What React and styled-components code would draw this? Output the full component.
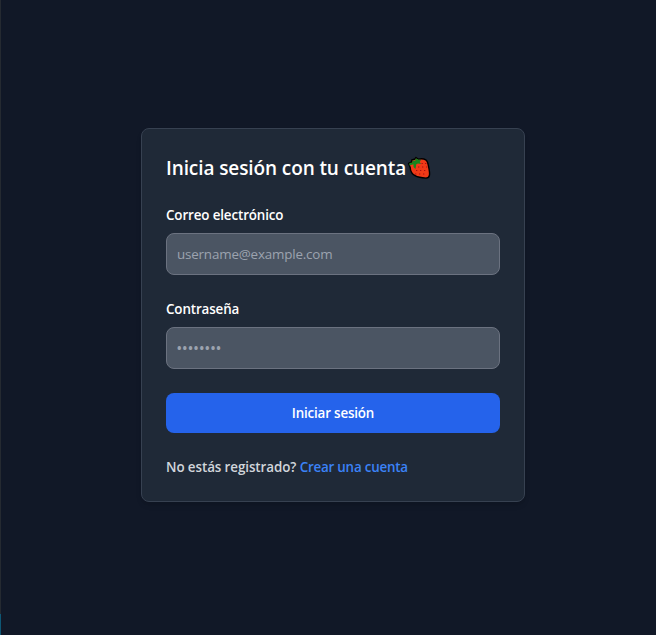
import React from "react";
import styled, { createGlobalStyle } from "styled-components";

const GlobalStyle = createGlobalStyle`
  *, *::before, *::after { box-sizing: border-box; }
  body {
    margin: 0;
    background: #111827;
    font-family: "Open Sans", "Noto Sans", sans-serif;
    font-size: 13.4px;
    line-height: 20px;
  }
`;

const Page = styled.main`
  display: flex;
  height: 635px;
`;

const EdgeStrip = styled.div`
  flex: none;
  width: 1px;
  background: linear-gradient(to bottom, #252a31 614px, #0e5775 614px);
`;

const Content = styled.section`
  flex: 1;
  display: flex;
  align-items: center;
  justify-content: center;
  padding: 0 0 5px 9px;
`;

const Card = styled.form`
  display: flex;
  flex-direction: column;
  gap: 24px;
  width: 384px;
  padding: 24px;
  background: #1f2937;
  border: 1px solid #374151;
  border-radius: 8px;
  box-shadow: 0 4px 6px -1px rgba(0, 0, 0, 0.1), 0 2px 4px -2px rgba(0, 0, 0, 0.1);
`;

const Title = styled.h1`
  display: flex;
  align-items: center;
  height: 28px;
  margin: 0;
  padding-top: 2px;
  color: #fff;
  font-size: 19px;
  font-weight: 600;
  line-height: 28px;
  white-space: nowrap;
`;

const TitleText = styled.span`
  width: 241px;
  letter-spacing: -0.1px;
`;

const StrawberryIcon = styled.svg`
  flex: none;
  width: 24px;
  height: 24px;
`;

const Field = styled.div`
  display: flex;
  flex-direction: column;
  gap: 8px;
`;

const Label = styled.label`
  color: #fff;
  font-weight: 600;
  letter-spacing: -0.13px;
`;

const Input = styled.input`
  width: 100%;
  height: 42px;
  padding: 10px;
  background: #4b5563;
  border: 1px solid #6b7280;
  border-radius: 8px;
  color: #fff;
  font: inherit;
  outline: none;
  &::placeholder {
    color: #9ca3af;
    opacity: 1;
    letter-spacing: -0.18px;
  }
`;

const PasswordInput = styled(Input)`
  &::placeholder {
    font-size: 12px;
    font-weight: 700;
    letter-spacing: 1.1px;
  }
`;

const SubmitButton = styled.button`
  height: 40px;
  padding: 10px 20px;
  background: #2563eb;
  border: 0;
  border-radius: 8px;
  color: #fff;
  font: inherit;
  font-weight: 600;
  letter-spacing: -0.18px;
`;

const Footer = styled.p`
  margin: 0;
  color: #d1d5db;
  font-weight: 600;
  letter-spacing: -0.09px;
  white-space: nowrap;
`;

const SignupLink = styled.a`
  color: #3b82f6;
  letter-spacing: -0.22px;
  text-decoration: none;
`;

function Strawberry() {
  return (
    <StrawberryIcon viewBox="0 0 24 24" aria-hidden="true">
      <path
        d="M8 3 9 1.500l2.300 1.700c2.700-.7 5.700-.4 7.500.7 1.800 1.200 2.200 3.600 2.700 6.200.7 3.300 1.400 6.500 1 9-.3 2-1.500 3-3.500 3-3.600-.2-8.300-1-11-2.500C4.800 18 3.300 15 3.200 11.600L1.600 7.500 4.800 6V4z"
        fill="#f03a17"
        stroke="#000"
        strokeWidth="1.4"
        strokeLinejoin="round"
      />
      <path
        d="M8.700 2.200 11 3.500l3 .3-1.300 2.200 1.300 2-3-.5-1.700.8-.8 4.700-2-2V8.200L2.300 9.500l.2-2.500 3-.4V4.500l2.800.2z"
        fill="#16851d"
      />
      <path
        d="M14.500 7.500h1.300M18 7.500h1.300M11 11h1.300M15 11h1.300M19 11h1.300M9 14.500h1.300M13 14.500h1.300M17 14.500h1.300M8 18h1.300M12 18h1.300M16 18h1.300"
        fill="none"
        stroke="#a90e12"
        strokeWidth="1.2"
      />
    </StrawberryIcon>
  );
}

export default function App() {
  return (
    <>
      <GlobalStyle />
      <Page>
        <EdgeStrip />
        <Content>
          <Card onSubmit={(e) => e.preventDefault()}>
            <Title>
              <TitleText>Inicia sesión con tu cuenta</TitleText>
              <Strawberry />
            </Title>
            <Field>
              <Label htmlFor="email">Correo electrónico</Label>
              <Input id="email" type="email" placeholder="username@example.com" />
            </Field>
            <Field>
              <Label htmlFor="password">Contraseña</Label>
              <PasswordInput id="password" type="password" placeholder="••••••••" />
            </Field>
            <SubmitButton type="submit">Iniciar sesión</SubmitButton>
            <Footer>
              No estás registrado? <SignupLink href="#">Crear una cuenta</SignupLink>
            </Footer>
          </Card>
        </Content>
      </Page>
    </>
  );
}
